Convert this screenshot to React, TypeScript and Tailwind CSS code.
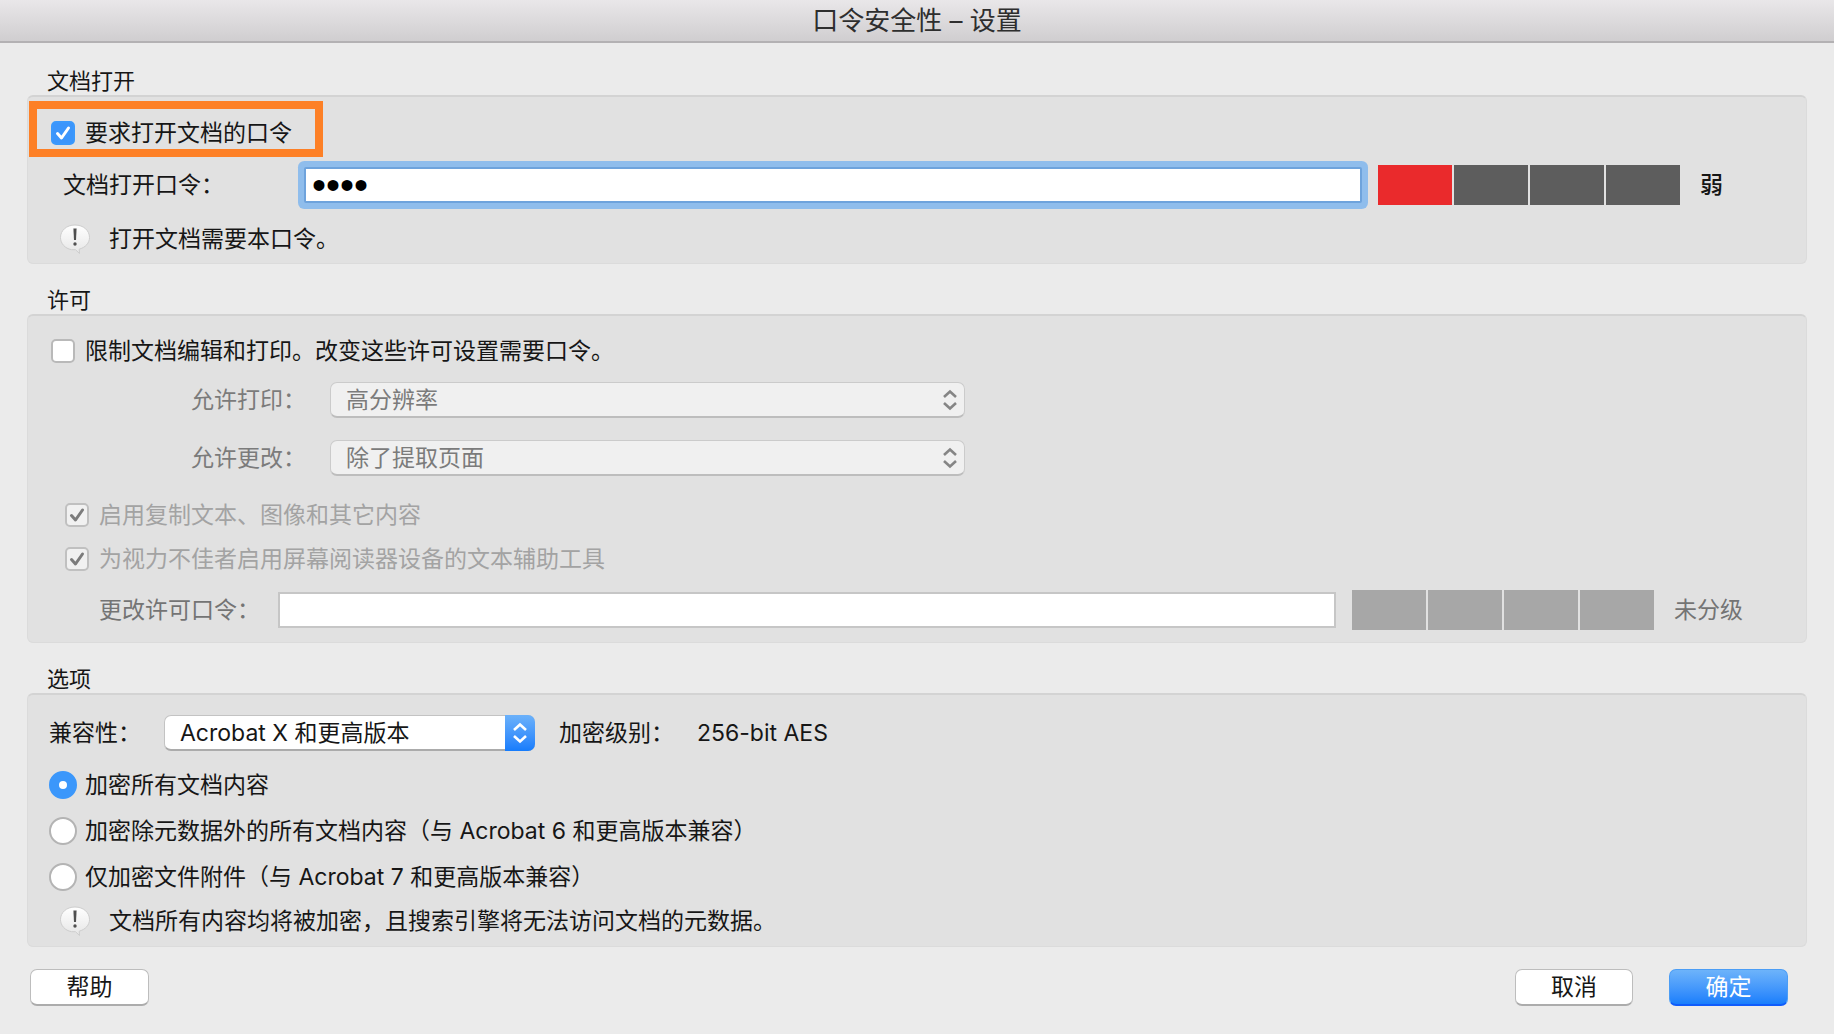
import { useState } from "react";
import type { InputHTMLAttributes, ReactNode, SelectHTMLAttributes } from "react";
import clsx from "clsx";

function Section({ title, children }: { title: string; children: ReactNode }) {
  return (
    <section>
      <h2 className="pl-5 text-[22px] leading-7">{title}</h2>
      <div className="rounded-md border border-[#dbdbdb] border-t-2 border-t-[#d3d3d3] bg-[#e1e1e1]">
        {children}
      </div>
    </section>
  );
}

function Checkbox({ className, ...props }: InputHTMLAttributes<HTMLInputElement>) {
  return (
    <span className="relative h-6 w-6 shrink-0">
      <input
        type="checkbox"
        className={clsx(
          "peer block h-6 w-6 appearance-none rounded-[5px] border-2 border-[#b9b9b9] bg-white",
          "enabled:checked:border-[#3b99fc] enabled:checked:bg-[#3b95fb] disabled:border-[#c0c0c0] disabled:bg-[#f1f1f1]",
          className
        )}
        {...props}
      />
      <svg
        viewBox="0 0 24 24"
        className="pointer-events-none absolute inset-0 hidden h-6 w-6 text-white peer-checked:block peer-disabled:text-[#7c7c7c]"
      >
        <path d="M6.5 12.5l4 4.5L17.5 7" fill="none" stroke="currentColor" strokeWidth="3" strokeLinecap="round" strokeLinejoin="round" />
      </svg>
    </span>
  );
}

function Radio(props: InputHTMLAttributes<HTMLInputElement>) {
  return (
    <input
      type="radio"
      className="h-7 w-7 shrink-0 appearance-none rounded-full border-2 border-[#b4b4b4] bg-white checked:border-10 checked:border-[#3b97fb]"
      {...props}
    />
  );
}

function Chevrons() {
  return (
    <svg viewBox="0 0 16 22" className="h-[22px] w-4" fill="none" stroke="currentColor" strokeWidth="2.6">
      <path d="M2 8l6-5.500 6 5.500" />
      <path d="M2 14l6 5.500 6-5.500" />
    </svg>
  );
}

function Select({ className, children, ...props }: SelectHTMLAttributes<HTMLSelectElement>) {
  return (
    <span className={clsx("relative block h-9", className)}>
      <select
        className="peer h-9 w-full appearance-none rounded-[7px] border border-b-2 border-[#c3c3c3] border-b-[#ababab] bg-white pl-[15px] text-[23px] leading-8 disabled:border-[#cbcbcb] disabled:border-b-[#bdbdbd] disabled:bg-[#f0f0f0] disabled:text-[#7b7b7b] disabled:opacity-100"
        {...props}
      >
        {children}
      </select>
      <span className="pointer-events-none absolute inset-y-0 right-0 flex w-[30px] items-center justify-center rounded-r-[7px] bg-linear-to-b from-[#6bb1fa] to-[#157cfc] text-white peer-disabled:bg-none peer-disabled:text-[#858585]">
        <Chevrons />
      </span>
    </span>
  );
}

function StrengthMeter({ level, disabled }: { level: number; disabled?: boolean }) {
  return (
    <div className="flex h-10 w-[302px] shrink-0 gap-[2px]">
      {[1, 2, 3, 4].map((step) => (
        <span
          key={step}
          className={clsx(
            "flex-1",
            disabled ? "bg-[#a7a7a7]" : step <= level ? "bg-[#ea2a2c]" : "bg-[#5d5d5d]"
          )}
        />
      ))}
    </div>
  );
}

function Note({ children }: { children: ReactNode }) {
  return (
    <p className="flex h-8 items-center gap-[19px] pl-8">
      <svg viewBox="0 0 30 30" className="h-[30px] w-[30px] shrink-0">
        <defs>
          <linearGradient id="bubble" x1="0" y1="0" x2="0" y2="1">
            <stop offset="0" stopColor="#ffffff" />
            <stop offset="1" stopColor="#e6e6e6" />
          </linearGradient>
        </defs>
        <path
          d="M15 1C6.500 1 .5 6.500 .5 13.500c0 6 4.500 11 11 12.200h4L19.500 29.500l-.3-4.300C25.500 23.500 29.500 19 29.500 13.500 29.500 6.500 23.500 1 15 1z"
          fill="url(#bubble)"
          stroke="#cdcdcd"
          strokeWidth="1"
        />
        <path d="M13.400 4.500h3.200l-.6 11.500h-2z" fill="#4f4f4f" />
        <circle cx="15" cy="20" r="1.700" fill="#4f4f4f" />
      </svg>
      {children}
    </p>
  );
}

const scopes = [
  { id: "all", label: "加密所有文档内容" },
  { id: "metadata", label: "加密除元数据外的所有文档内容（与 Acrobat 6 和更高版本兼容）" },
  { id: "attachments", label: "仅加密文件附件（与 Acrobat 7 和更高版本兼容）" },
];

export default function App() {
  const [requireOpen, setRequireOpen] = useState(true);
  const [restrict, setRestrict] = useState(false);
  const [openPassword, setOpenPassword] = useState("1234");
  const [scope, setScope] = useState("all");

  return (
    <div className="min-h-screen bg-[#ebebeb] font-[Inter,'Noto_Sans_CJK_SC',sans-serif] text-[23px] leading-8 text-[#161616]">
      <header className="flex h-[43px] items-center justify-center border-b-2 border-[#b3b1b3] bg-linear-to-b from-[#e9e7e9] to-[#d0ced0]">
        <h1 className="text-[26px] leading-8 text-[#2e2e2e]">口令安全性 – 设置</h1>
      </header>

      <main className="flex flex-col gap-[22px] px-[27px] pt-6">
        <Section title="文档打开">
          <div className="pt-1 pb-2">
            <label className="ml-px flex h-14 w-[294px] items-center gap-[10px] border-8 border-[#fd8026] pt-2 pl-[14px]">
              <Checkbox checked={requireOpen} onChange={(e) => setRequireOpen(e.target.checked)} />
              要求打开文档的口令
            </label>

            <div className="mt-2 flex h-10 items-center pl-[35px]">
              <label htmlFor="open-password" className="w-[241px] shrink-0">
                文档打开口令：
              </label>
              <input
                id="open-password"
                type="password"
                value={openPassword}
                onChange={(e) => setOpenPassword(e.target.value)}
                className="mr-4 h-9 min-w-0 flex-1 rounded-[2px] border-2 border-[#6ea3dc] bg-white pl-[6px] font-['Liberation_Sans',sans-serif] text-[40px] leading-8 text-black ring-6 ring-[#8fbdec] outline-none"
              />
              <StrengthMeter level={1} />
              <span className="ml-5 w-[106px] shrink-0 font-medium">弱</span>
            </div>

            <div className="mt-[18px]">
              <Note>打开文档需要本口令。</Note>
            </div>
          </div>
        </Section>

        <Section title="许可">
          <div className="pt-[19px] pb-3">
            <label className="flex items-center gap-[10px] pl-[23px]">
              <Checkbox checked={restrict} onChange={(e) => setRestrict(e.target.checked)} />
              限制文档编辑和打印。改变这些许可设置需要口令。
            </label>

            <div className="mt-[15px] flex h-9 items-center pl-[163px] text-[#7b7b7b]">
              <label htmlFor="printing" className="w-[139px] shrink-0">
                允许打印：
              </label>
              <Select id="printing" disabled className="w-[635px]">
                <option>高分辨率</option>
              </Select>
            </div>
            <div className="mt-[22px] flex h-9 items-center pl-[163px] text-[#7b7b7b]">
              <label htmlFor="changes" className="w-[139px] shrink-0">
                允许更改：
              </label>
              <Select id="changes" disabled className="w-[635px]">
                <option>除了提取页面</option>
              </Select>
            </div>

            <label className="mt-[23px] flex items-center gap-[10px] pl-[37px] text-[#a3a3a3]">
              <Checkbox disabled defaultChecked />
              启用复制文本、图像和其它内容
            </label>
            <label className="mt-3 flex items-center gap-[10px] pl-[37px] text-[#a3a3a3]">
              <Checkbox disabled defaultChecked />
              为视力不佳者启用屏幕阅读器设备的文本辅助工具
            </label>

            <div className="mt-[15px] flex h-10 items-center pl-[71px] text-[#747474]">
              <label htmlFor="permission-password" className="w-[179px] shrink-0">
                更改许可口令：
              </label>
              <input
                id="permission-password"
                type="password"
                disabled
                className="mr-4 h-9 min-w-0 flex-1 border-2 border-[#c6c6c6] bg-white"
              />
              <StrengthMeter level={0} disabled />
              <span className="ml-5 w-[132px] shrink-0">未分级</span>
            </div>
          </div>
        </Section>

        <Section title="选项">
          <div className="pt-5 pb-[9px]">
            <div className="flex h-9 items-center pl-[21px]">
              <label htmlFor="compatibility" className="w-[115px] shrink-0">
                兼容性：
              </label>
              <Select id="compatibility" className="w-[371px]">
                <option>Acrobat X 和更高版本</option>
              </Select>
              <span className="ml-6 w-[138px]">加密级别：</span>
              <span>256-bit AES</span>
            </div>

            <div className="mt-[18px] flex flex-col gap-[14px] pl-[21px]">
              {scopes.map((item) => (
                <label key={item.id} className="flex items-center gap-2">
                  <Radio
                    name="scope"
                    value={item.id}
                    checked={scope === item.id}
                    onChange={() => setScope(item.id)}
                  />
                  {item.label}
                </label>
              ))}
            </div>

            <div className="mt-3">
              <Note>文档所有内容均将被加密，且搜索引擎将无法访问文档的元数据。</Note>
            </div>
          </div>
        </Section>
      </main>

      <footer className="flex gap-9 pt-[22px] pr-[46px] pb-6 pl-[30px]">
        <button className="mr-auto h-[37px] w-[119px] rounded-[7px] border border-b-2 border-[#bdbdbd] border-b-[#acacac] bg-white">
          帮助
        </button>
        <button className="h-[37px] w-[118px] rounded-[7px] border border-b-2 border-[#bdbdbd] border-b-[#acacac] bg-white">
          取消
        </button>
        <button className="h-[37px] w-[119px] rounded-[7px] border border-b-2 border-[#4b9df5] border-b-[#0f5cfb] bg-linear-to-b from-[#6db3fa] to-[#177efc] text-white">
          确定
        </button>
      </footer>
    </div>
  );
}
